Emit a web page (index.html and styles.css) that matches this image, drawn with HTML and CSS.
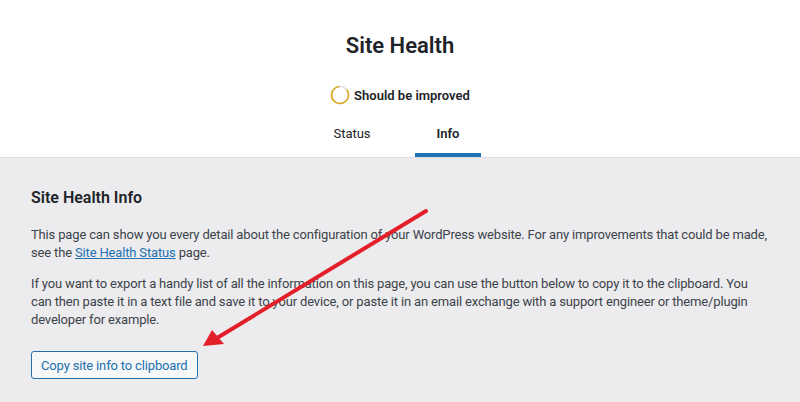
FILE: index.html
```html
<!DOCTYPE html>
<html>
<head>
<meta charset="utf-8">
<link rel="stylesheet" href="styles.css">
</head>
<body>
<header class="health-header">
  <h1 class="title">Site Health</h1>
  <div class="status">
    <svg class="status-ring" width="20" height="20" viewBox="0 0 20 20">
      <circle cx="10" cy="10" r="8.5" fill="none" stroke="#dcdcde" stroke-width="1.6"/>
      <circle cx="10" cy="10" r="8.5" fill="none" stroke="#dba617" stroke-width="1.6" stroke-dasharray="45 60" transform="rotate(-40 10 10)"/>
    </svg>
    <span>Should be improved</span>
  </div>
  <nav class="tabs">
    <a class="tab">Status</a>
    <a class="tab active">Info</a>
  </nav>
</header>
<main class="content">
  <h2 class="section-title">Site Health Info</h2>
  <p class="text">This page can show you every detail about the configuration of your WordPress website. For any improvements that could be made, see the <a class="link">Site Health Status</a> page.</p>
  <p class="text">If you want to export a handy list of all the information on this page, you can use the button below to copy it to the clipboard. You can then paste it in a text file and save it to your device, or paste it in an email exchange with a support engineer or theme/plugin developer for example.</p>
  <button class="copy-btn">Copy site info to clipboard</button>
  <svg class="arrow" width="800" height="402" viewBox="0 0 800 402">
    <line x1="426" y1="211" x2="217" y2="338" stroke="#e3202a" stroke-width="4" stroke-linecap="round"/>
    <polygon points="203,346 212,330 224,344" fill="#e3202a"/>
  </svg>
</main>
</body>
</html>
```
FILE: styles.css
```css
html, body {
  margin: 0;
  padding: 0;
}
body {
  font-family: Roboto, "Liberation Sans", Arial, sans-serif;
  color: #1d2327;
  background: #ececee;
  width: 800px;
  height: 402px;
  overflow: hidden;
}
.health-header {
  background: #fff;
  border-bottom: 1px solid #dcdcde;
  text-align: center;
  padding-top: 31px;
  height: 126px;
}
.title {
  margin: 0;
  font-size: 22px;
  line-height: 29px;
  font-weight: 600;
}
.status {
  margin-top: 25px;
  display: flex;
  justify-content: center;
  align-items: center;
  gap: 4px;
  font-size: 13px;
  font-weight: 600;
  height: 20px;
  color: #1d2327;
}
.status-ring {
  display: block;
}
.tabs {
  margin-top: 4px;
  display: flex;
  justify-content: center;
  gap: 30px;
}
.tab {
  display: block;
  width: 66px;
  font-size: 13px;
  line-height: 18px;
  padding: 16px 0 10px;
  border-bottom: 4px solid transparent;
  color: #1d2327;
}
.tab.active {
  font-weight: 600;
  border-bottom-color: #2271b1;
}
.content {
  position: relative;
  padding: 30px 31px 0;
}
.section-title {
  margin: 0 0 18px;
  font-size: 16px;
  line-height: 20px;
  font-weight: 600;
}
.text {
  margin: 0 0 13px;
  font-size: 13px;
  line-height: 18px;
  letter-spacing: -0.16px;
  color: #3c434a;
}
.link {
  color: #2271b1;
  text-decoration: underline;
}
.copy-btn {
  margin-top: 9px;
  font-family: inherit;
  font-size: 13px;
  letter-spacing: -0.16px;
  color: #2271b1;
  background: #f6f7f7;
  border: 1px solid #2271b1;
  border-radius: 3px;
  height: 28px;
  padding: 0 9px;
  white-space: nowrap;
}
.arrow {
  position: absolute;
  left: 0;
  top: -158px;
  pointer-events: none;
}
```
